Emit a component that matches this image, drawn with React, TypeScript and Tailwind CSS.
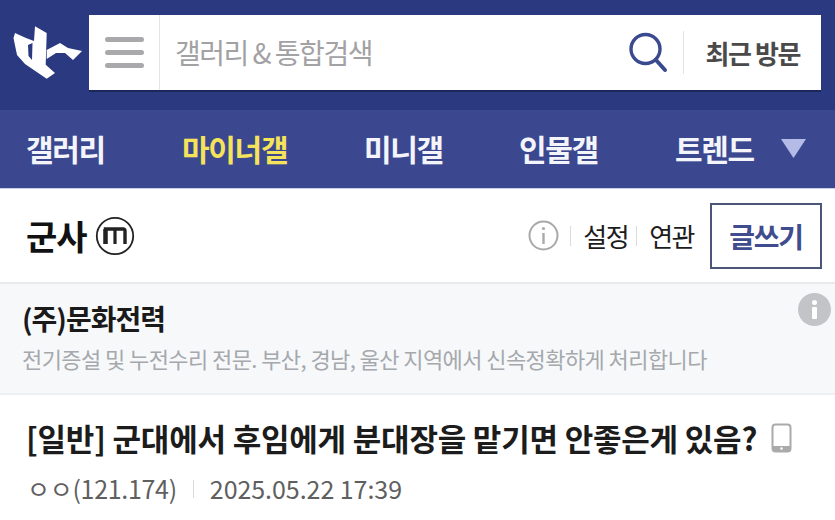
const font = "font-['Noto_Sans_CJK_KR','Noto_Sans',sans-serif]";

function Logo() {
  return (
    <svg width="70" height="54" viewBox="0 0 70 54" className="shrink-0 mt-[11px]">
      <path fill="#fff" fillRule="evenodd" d="M2 7 L13 12 L21 15 L22 0.3 L33.7 7 L32.7 38.7 L42 47 L33.7 52.7 L12 38 L4 29 L0.5 12 Z M15 19 L19.5 17 L19 34 L15.5 30 Z" />
      <path fill="#fff" d="M33.7 24 L47 17 L55 22 L69 25 L60 34 L52 27 L43 27 L33.7 33 Z" />
    </svg>
  );
}

function Divider({ className }: { className: string }) {
  return <span className={className} />;
}

export default function App() {
  return (
    <div className={`${font} w-[835px] h-[520px] overflow-hidden bg-white flex flex-col`}>
      <header className="h-[110px] bg-[#2b3a80] flex items-start pt-[15px] pl-[13px] pr-[14px] gap-[6px]">
        <Logo />
        <div className="flex-1 h-[77px] bg-white flex items-center border-b-2 border-[#1c2658]">
          <button className="w-[71px] h-full flex flex-col items-center justify-center gap-[8px] border-r border-[#e4e4e4]">
            <span className="w-[39px] h-[5px] rounded-full bg-[#a9a9ab]" />
            <span className="w-[39px] h-[5px] rounded-full bg-[#a9a9ab]" />
            <span className="w-[39px] h-[5px] rounded-full bg-[#a9a9ab]" />
          </button>
          <span className="ml-[15px] flex-1 text-[28px] tracking-[-1.5px] text-[#a2a2a4] leading-none pb-[1px]">갤러리 &amp; 통합검색</span>
          <svg width="40" height="44" viewBox="0 0 40 44" fill="none" stroke="#3b4a8e" strokeWidth="3.4" strokeLinecap="round" className="mr-[15px]">
            <circle cx="17.5" cy="18" r="14.5" />
            <path d="M28 29 L37 39" strokeWidth="4" />
          </svg>
          <Divider className="w-[1px] h-[43px] bg-[#e2e2e2]" />
          <span className="ml-[21px] mr-[21px] text-[26px] font-bold tracking-[-1.4px] text-[#4a4a4a] leading-none whitespace-nowrap">최근 방문</span>
        </div>
      </header>

      <nav className="h-[79px] bg-[#3b4890] border-b border-[#c9cfe6] flex items-center pl-[26px] pb-[2px] text-[30px] font-bold tracking-[-1.3px] text-[#f4f5fb] leading-none whitespace-nowrap">
        <span className="w-[156px] shrink-0">갤러리</span>
        <span className="w-[182px] shrink-0 text-[#f5e35a]">마이너갤</span>
        <span className="w-[155px] shrink-0">미니갤</span>
        <span className="w-[156px] shrink-0">인물갤</span>
        <span className="shrink-0">트렌드</span>
        <svg width="26" height="21" viewBox="0 0 26 21" className="ml-[27px] shrink-0">
          <path d="M0 1 H25 L12.5 20 Z" fill="#b4bbe6" />
        </svg>
      </nav>

      <section className="h-[95px] flex items-center pl-[26px] pr-[13px] border-b-2 border-[#e9eaee]">
        <h1 className="text-[34px] font-bold tracking-[-1px] text-[#111] leading-none">군사</h1>
        <svg width="40" height="40" viewBox="0 0 40 40" fill="none" stroke="#222" className="ml-[8px]">
          <circle cx="20" cy="20" r="18.2" strokeWidth="1.8" />
          <path d="M10.5 28 V13 H28 Q30 13 30 15 V28" strokeWidth="3.4" />
          <path d="M20 13 V28" strokeWidth="3.2" />
          <path d="M10.5 13 V28" strokeWidth="4.4" />
        </svg>
        <div className="ml-auto flex items-center">
          <svg width="31" height="31" viewBox="0 0 31 31" fill="none" stroke="#a9a9a9">
            <circle cx="15.5" cy="15.5" r="14" strokeWidth="2" />
            <path d="M15.5 13 V24" strokeWidth="2.4" />
            <circle cx="15.5" cy="8.5" r="1.6" fill="#a9a9a9" stroke="none" />
          </svg>
          <Divider className="ml-[11px] w-[1px] h-[20px] bg-[#dcdcdc]" />
          <span className="ml-[12px] text-[26px] tracking-[-1.5px] text-[#1c1c1c] leading-none">설정</span>
          <Divider className="ml-[8px] w-[1px] h-[20px] bg-[#dcdcdc]" />
          <span className="ml-[12px] text-[26px] tracking-[-1.5px] text-[#1c1c1c] leading-none">연관</span>
          <button className="ml-[16px] w-[112px] h-[66px] border-2 border-[#4a5578] text-[28px] font-bold tracking-[-1.2px] text-[#3f4c8e] leading-none">글쓰기</button>
        </div>
      </section>

      <section className="relative h-[111px] bg-[#f7f8fa] border-b-2 border-[#eeeff2] pl-[22px] pt-[16px]">
        <div className="text-[28px] font-bold tracking-[-1px] text-[#1a1a1a] leading-[36px]">(주)문화전력</div>
        <div className="mt-[8px] text-[22px] tracking-[-0.58px] text-[#a5a8ad] leading-[28px] whitespace-nowrap">전기증설 및 누전수리 전문. 부산, 경남, 울산 지역에서 신속정확하게 처리합니다</div>
        <span className="absolute right-[4px] top-[9px] w-[33px] h-[33px] rounded-full bg-[#c3c4c7] flex flex-col items-center justify-center gap-[2px]">
          <span className="w-[5px] h-[5px] rounded-full bg-white" />
          <span className="w-[5px] h-[12px] bg-white rounded-[1px]" />
        </span>
      </section>

      <article className="pl-[26px] pt-[24px]">
        <div className="flex items-center">
          <span className="text-[31px] font-bold tracking-[-0.2px] text-[#1c1c1c] leading-[38px] whitespace-nowrap">[일반] 군대에서 후임에게 분대장을 맡기면 안좋은게 있음?</span>
          <svg width="21" height="30" viewBox="0 0 21 30" className="ml-[14px]" fill="none">
            <rect x="1.5" y="1.5" width="18" height="27" rx="3" stroke="#aaa" strokeWidth="2" />
            <path d="M2 23 H19 V26 Q19 28 17 28 H4 Q2 28 2 26 Z" fill="#aaa" />
            <circle cx="10.5" cy="25.5" r="1.2" fill="#fff" />
          </svg>
        </div>
        <div className="mt-[19px] ml-[1px] flex items-center text-[25px] text-[#5f5f5f] leading-none">
          <span className="tracking-[-0.3px]">ㅇㅇ(121.174)</span>
          <Divider className="ml-[16px] w-[1px] h-[18px] bg-[#d8d8d8]" />
          <span className="ml-[16px] tracking-[-0.05px]">2025.05.22 17:39</span>
        </div>
      </article>
    </div>
  );
}
